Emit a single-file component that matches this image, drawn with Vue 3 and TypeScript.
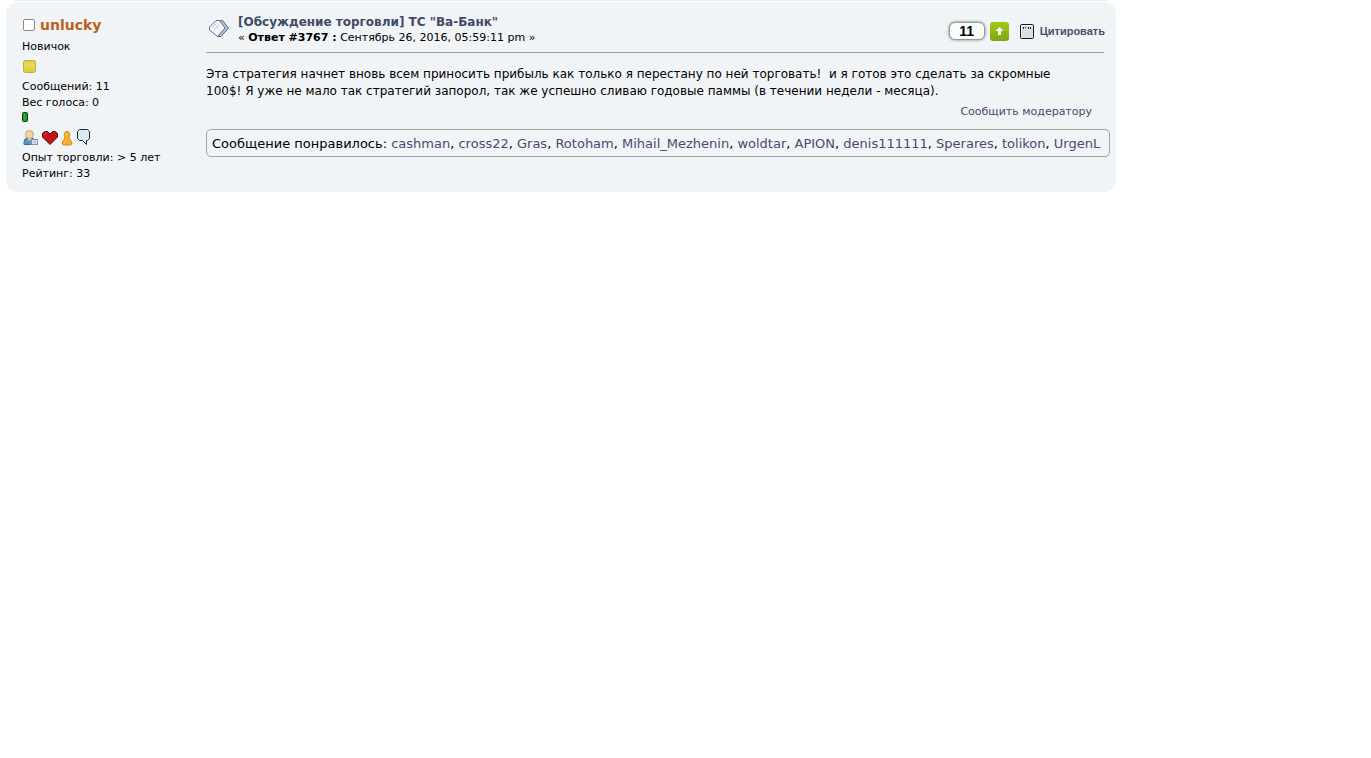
<script setup lang="ts">
import { ref } from 'vue'

const selected = ref(false)
const likes: string[] = [
  'cashman', 'cross22', 'Gras', 'Rotoham', 'Mihail_Mezhenin', 'woldtar',
  'APION', 'denis111111', 'Sperares', 'tolikon', 'UrgenL',
]
</script>

<template>
  <main class="topic">
    <div class="previous"></div>
    <article class="post">
      <aside class="poster">
        <h4 class="name">
          <input v-model="selected" type="checkbox" aria-label="unlucky" />
          <a href="#">unlucky</a>
        </h4>
        <ul class="details">
          <li>Новичок</li>
          <li class="rank">
            <svg width="14" height="14" viewBox="0 0 14 14" aria-hidden="true">
              <defs>
                <linearGradient id="gold" x1="0" y1="0" x2="0" y2="1">
                  <stop offset="0" stop-color="#d9cf3c" />
                  <stop offset="0.4" stop-color="#eadb55" />
                  <stop offset="1" stop-color="#dccb30" />
                </linearGradient>
              </defs>
              <rect x="0.5" y="0.5" width="12" height="12" rx="2" fill="url(#gold)" stroke="#b9ad4c" />
            </svg>
          </li>
          <li>Сообщений: 11</li>
          <li>Вес голоса: 0</li>
          <li class="karma">
            <svg width="6" height="10" viewBox="0 0 6 10" aria-hidden="true">
              <rect x="0.5" y="0.5" width="5" height="9" rx="1" fill="#1a9a28" stroke="#0a3d10" />
              <path d="M2.500 2v6" stroke="#2fae3a" />
            </svg>
          </li>
          <li class="icons">
            <a href="#" aria-label="Профиль">
              <svg width="16" height="16" viewBox="0 0 16 16">
                <path d="M1 14.500V12q0-3.500 3.500-4h4q3.500.5 3.500 4v2.500z" fill="#5f93bd" stroke="#3d6f98" />
                <path d="M4.500 8h4L6.500 11z" fill="#dcebf5" />
                <circle cx="6.500" cy="4.500" r="4" fill="#f2d39a" stroke="#c2a670" />
                <rect x="8.500" y="9.500" width="6" height="5" fill="#e4e9ef" stroke="#8592a3" />
                <path d="M10.500 11v2h2v-2z" fill="none" stroke="#b4bdc9" />
              </svg>
            </a>
            <a href="#" aria-label="Нравится">
              <svg width="16" height="16" viewBox="0 0 16 16">
                <path d="M8 14.500L.5 7V3.500L3 1.500h2.500L8 4l2.500-2.500H13l2.500 2V7z" fill="#c61219" stroke="#4c080b" />
                <path d="M2.500 4.500L4 3.200" stroke="#ed666b" />
              </svg>
            </a>
            <a href="#" aria-label="Друзья">
              <svg width="12" height="16" viewBox="0 0 12 16">
                <path d="M6 1.500C3 1.500 2.500 5 4 7C4 9.500 1 10.500 1 14L2.500 15h7l1.500-1C11 10.500 8 9.500 8 7C9.500 5 9 1.500 6 1.500z" fill="#f8ac2b" stroke="#d38a20" />
                <path d="M5 3v3M4 11.500l-1 2" stroke="#ffd677" />
              </svg>
            </a>
            <a href="#" aria-label="Личное сообщение">
              <svg width="15" height="17" viewBox="0 0 15 17">
                <path d="M3.500.5h8l2 2v7l-2 2H10.500v4L6.500 11.500h-3l-2-2v-7z" fill="#dbe9f5" stroke="#1e2833" />
              </svg>
            </a>
          </li>
          <li>Опыт торговли: &gt; 5 лет</li>
          <li>Рейтинг: 33</li>
        </ul>
      </aside>

      <div class="content">
        <header class="heading">
          <svg class="topic-icon" width="22" height="20" viewBox="0 0 22 20" aria-hidden="true">
            <path d="M12 1.500h2.500l6 7.500-7.500 8.500h-3z" fill="#aebfe2" stroke="#58657f" />
            <path d="M1.500 8L8 1.500h3.500l5.500 7.500-7.500 8.500L1.500 11z" fill="#f3f5f9" stroke="#667086" />
            <path d="M4.500 8l4-3.500M6 10.500l5-4.500" fill="none" stroke="#b9c0cd" />
          </svg>
          <div class="titles">
            <h5><a href="#">[Обсуждение торговли] ТС "Ва-Банк"</a></h5>
            <p class="date">« <strong>Ответ #3767 :</strong> Сентябрь 26, 2016, 05:59:11 pm »</p>
          </div>
          <div class="actions">
            <span class="score">11</span>
            <button class="up" type="button" aria-label="Нравится">
              <svg width="19" height="19" viewBox="0 0 19 19">
                <path d="M9.500 5L13.500 9H11v4H8V9H5.500z" fill="#fff" />
              </svg>
            </button>
            <a class="quote" href="#">
              <svg width="14" height="15" viewBox="0 0 14 15" aria-hidden="true">
                <rect x="0.5" y="0.5" width="13" height="14" rx="1" fill="#d9dde7" stroke="#171b24" />
                <path d="M3.500 3v2M5.500 3v1M8.500 3v2M10.500 3v2" stroke="#1d2230" />
                <path d="M1.500 13.500V1.500H12" fill="none" stroke="#f6f7fa" />
              </svg>
              Цитировать
            </a>
          </div>
        </header>
        <p class="message">Эта стратегия начнет вновь всем приносить прибыль как только я перестану по ней торговать!&nbsp; и я готов это сделать за скромные 100$! Я уже не мало так стратегий запорол, так же успешно сливаю годовые паммы (в течении недели - месяца).</p>
        <div class="report"><a href="#">Сообщить модератору</a></div>
        <div class="likes">
          Сообщение понравилось:
          <template v-for="(name, i) in likes" :key="name"><a href="#">{{ name }}</a><template v-if="i < likes.length - 1">, </template></template>
        </div>
      </div>
    </article>
  </main>
</template>

<style>
body {
  margin: 0;
  background: #fff;
}
</style>

<style scoped>
.topic {
  max-width: 1110px;
  margin: 0 6px;
  font-family: Verdana, "DejaVu Sans", sans-serif;
  font-size: 11px;
  line-height: 16px;
  color: #000;
}
a {
  color: #4a4a70;
  text-decoration: none;
}
h4, h5, p, ul {
  margin: 0;
  padding: 0;
}
svg {
  display: block;
}
.previous {
  height: 1px;
  margin: 0 8px 1px;
  background: #e9edf1;
}
.post {
  display: flex;
  min-height: 190px;
  box-sizing: border-box;
  padding: 12px 6px 10px 16px;
  border-radius: 12px;
  background: #f0f4f7;
}
.poster {
  flex: 0 0 184px;
}
.name {
  display: flex;
  align-items: center;
  gap: 5px;
  height: 22px;
  font-size: 14px;
}
.name a {
  color: #b9621c;
}
.name input {
  appearance: none;
  width: 12px;
  height: 12px;
  margin: 0 0 0 1px;
  border: 1px solid #8a8a8a;
  border-radius: 2px;
  background: #fff;
}
.name input:checked {
  background: #4a6f9e;
}
.details {
  padding-top: 3px;
  list-style: none;
}
.rank {
  padding: 5px 1px;
}
.karma {
  padding: 1px 0 3px;
}
.icons {
  display: flex;
  align-items: center;
  gap: 3px;
  height: 17px;
  padding: 4px 1px;
}
.content {
  flex: 1;
  min-width: 0;
}
.heading {
  display: flex;
  align-items: flex-start;
  height: 38px;
  margin-right: 6px;
  border-bottom: 1px solid #9a9da3;
}
.topic-icon {
  margin: 5px 8px 0 2px;
}
.titles {
  flex: 1;
}
.titles h5 {
  font-size: 12px;
}
.titles h5 a {
  color: #3f4b66;
}
.actions {
  display: flex;
  align-items: center;
  height: 24px;
  padding-top: 5px;
  margin-right: -1px;
}
.score {
  width: 34px;
  height: 16px;
  border: 1px solid #999;
  border-radius: 6px;
  background: #fafbfb;
  box-shadow: 0 0 3px #777;
  font: bold 14px/16px "Liberation Sans", Arial, sans-serif;
  text-align: center;
}
.up {
  width: 19px;
  height: 19px;
  margin: 0 11px 0 5px;
  padding: 0;
  border: 0;
  border-radius: 3px;
  background: linear-gradient(#a3c81c, #7da510);
}
.quote {
  display: flex;
  align-items: center;
  gap: 6px;
  color: #47506a;
  font: bold 11px/16px "Liberation Sans", Arial, sans-serif;
}
.message {
  margin: 13px 36px 0 0;
  font-size: 12px;
  line-height: 17px;
}
.report {
  margin: 4px 18px 9px 0;
  text-align: right;
}
.likes {
  padding: 6px 5px 4px;
  border: 1px solid #a0a2a6;
  border-radius: 5px;
  font-size: 13px;
}
</style>
